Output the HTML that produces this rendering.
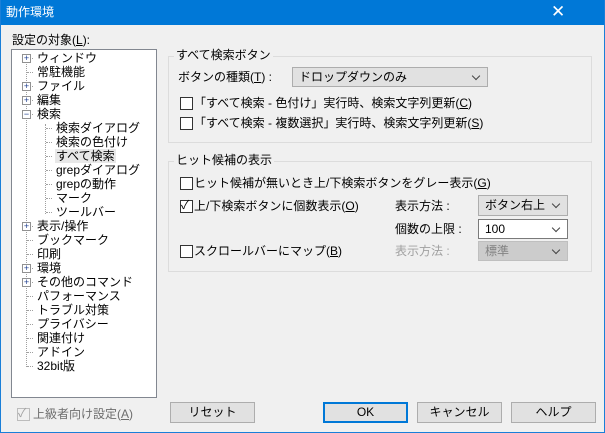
<!DOCTYPE html>
<html><head><meta charset="utf-8"><style>
*{margin:0;padding:0;box-sizing:border-box}
body{width:605px;height:433px;background:#f0f0f0;font-family:"Liberation Sans","Noto Sans CJK JP",sans-serif;font-size:12px;color:#000;position:relative;overflow:hidden}
.a{position:absolute;white-space:nowrap;line-height:14px}
#frame{position:absolute;left:0;top:0;width:605px;height:433px;border:1px solid #1a7fd8;border-top:none}
#title{position:absolute;left:0;top:0;width:605px;height:25px;background:#0078d7;color:#fff;font-size:12px;line-height:25px;padding-left:6px}
.grp{position:absolute;border:1px solid #dcdcdc}
.gt{position:absolute;background:#f0f0f0;padding:0 2px;line-height:14px}
.cb{position:absolute;width:13px;height:13px;border:1px solid #333;background:#fff}
.combo{position:absolute;border:1px solid #adadad;background:#e1e1e1;padding-left:6px;line-height:18px}
.combo:after{content:"";position:absolute;right:8px;top:5px;width:5px;height:5px;border-right:1px solid #444;border-bottom:1px solid #444;transform:rotate(45deg)}
.btn{position:absolute;width:85px;height:21px;border:1px solid #adadad;background:#e1e1e1;text-align:center;line-height:19px}
.pl{position:absolute;width:9px;height:9px;border:1px solid #919191;background:#fff;font-size:9px;line-height:7px;text-align:center;color:#1f3f8f;z-index:2}
.d1,.d2{position:absolute;border-top:1px dotted #a0a0a0;width:6px}
.d1{left:27px}.d2{left:46px}
</style></head><body>
<div id="title">動作環境</div>
<div class="a" style="left:551px;top:3px;color:#fff;font-size:17px;line-height:18px">✕</div>
<div id="frame"></div>
<div class="a" style="left:12px;top:33px">設定の対象(<u>L</u>):</div>
<div style="position:absolute;left:11px;top:49px;width:146px;height:349px;background:#fff;border:1px solid #828790"></div>
<div style="position:absolute;left:26px;top:62px;height:305px;border-left:1px dotted #a0a0a0"></div>
<div style="position:absolute;left:45px;top:124px;height:90px;border-left:1px dotted #a0a0a0"></div>
<div class="d1" style="top:58px"></div><div class="d1" style="top:72px"></div><div class="d1" style="top:86px"></div><div class="d1" style="top:100px"></div><div class="d1" style="top:114px"></div>
<div class="d1" style="top:226px"></div><div class="d1" style="top:240px"></div><div class="d1" style="top:254px"></div><div class="d1" style="top:268px"></div><div class="d1" style="top:282px"></div><div class="d1" style="top:296px"></div><div class="d1" style="top:310px"></div><div class="d1" style="top:324px"></div><div class="d1" style="top:338px"></div><div class="d1" style="top:352px"></div><div class="d1" style="top:366px"></div>
<div class="d2" style="top:128px"></div><div class="d2" style="top:142px"></div><div class="d2" style="top:156px"></div><div class="d2" style="top:170px"></div><div class="d2" style="top:184px"></div><div class="d2" style="top:198px"></div><div class="d2" style="top:212px"></div>
<div class="pl" style="left:22px;top:54px">+</div>
<div class="pl" style="left:22px;top:82px">+</div>
<div class="pl" style="left:22px;top:96px">+</div>
<div class="pl" style="left:22px;top:110px">−</div>
<div class="pl" style="left:22px;top:222px">+</div>
<div class="pl" style="left:22px;top:264px">+</div>
<div class="pl" style="left:22px;top:278px">+</div>
<div class="a" style="left:37px;top:51px">ウィンドウ</div>
<div class="a" style="left:37px;top:65px">常駐機能</div>
<div class="a" style="left:37px;top:79px">ファイル</div>
<div class="a" style="left:37px;top:93px">編集</div>
<div class="a" style="left:37px;top:107px">検索</div>
<div class="a" style="left:56px;top:121px">検索ダイアログ</div>
<div class="a" style="left:56px;top:135px">検索の色付け</div>
<div class="a" style="left:55px;top:149px;background:#e8e8e8;padding:0 1px">すべて検索</div>
<div class="a" style="left:56px;top:163px">grepダイアログ</div>
<div class="a" style="left:56px;top:177px">grepの動作</div>
<div class="a" style="left:56px;top:191px">マーク</div>
<div class="a" style="left:56px;top:205px">ツールバー</div>
<div class="a" style="left:37px;top:219px">表示/操作</div>
<div class="a" style="left:37px;top:233px">ブックマーク</div>
<div class="a" style="left:37px;top:247px">印刷</div>
<div class="a" style="left:37px;top:261px">環境</div>
<div class="a" style="left:37px;top:275px">その他のコマンド</div>
<div class="a" style="left:37px;top:289px">パフォーマンス</div>
<div class="a" style="left:37px;top:303px">トラブル対策</div>
<div class="a" style="left:37px;top:317px">プライバシー</div>
<div class="a" style="left:37px;top:331px">関連付け</div>
<div class="a" style="left:37px;top:345px">アドイン</div>
<div class="a" style="left:37px;top:359px">32bit版</div>

<div class="grp" style="left:168px;top:56px;width:424px;height:87px"></div>
<div class="gt" style="left:174px;top:48px">すべて検索ボタン</div>
<div class="a" style="left:178px;top:70px">ボタンの種類(<u>T</u>) :</div>
<div class="combo" style="left:292px;top:67px;width:196px;height:20px">ドロップダウンのみ</div>
<div class="cb" style="left:180px;top:97px"></div>
<div class="a" style="left:194px;top:96px">「すべて検索 - 色付け」実行時、検索文字列更新(<u>C</u>)</div>
<div class="cb" style="left:180px;top:117px"></div>
<div class="a" style="left:194px;top:116px">「すべて検索 - 複数選択」実行時、検索文字列更新(<u>S</u>)</div>

<div class="grp" style="left:168px;top:161px;width:424px;height:111px"></div>
<div class="gt" style="left:174px;top:153px">ヒット候補の表示</div>
<div class="cb" style="left:180px;top:177px"></div>
<div class="a" style="left:194px;top:176px">ヒット候補が無いとき上/下検索ボタンをグレー表示(<u>G</u>)</div>
<div class="cb" style="left:180px;top:200px;border-color:#333"></div>
<div class="a" style="left:181px;top:198px;font-size:12px">✓</div>
<div class="a" style="left:194px;top:199px">上/下検索ボタンに個数表示(<u>O</u>)</div>
<div class="a" style="left:395px;top:199px">表示方法 :</div>
<div class="combo" style="left:478px;top:195px;width:90px;height:21px">ボタン右上</div>
<div class="a" style="left:395px;top:222px">個数の上限 :</div>
<div class="combo" style="left:478px;top:219px;width:90px;height:20px;background:#fff;border-color:#7a7a7a">100</div>
<div class="cb" style="left:180px;top:245px"></div>
<div class="a" style="left:194px;top:244px">スクロールバーにマップ(<u>B</u>)</div>
<div class="a" style="left:395px;top:244px;color:#a0a0a0">表示方法 :</div>
<div class="combo" style="left:478px;top:241px;width:90px;height:20px;background:#ccc;border-color:#bfbfbf;color:#838383">標準</div>

<div class="cb" style="left:17px;top:408px;border-color:#bcbcbc;background:#f0f0f0"></div>
<div class="a" style="left:18px;top:406px;color:#a0a0a0">✓</div>
<div class="a" style="left:33px;top:407px;color:#6d6d6d">上級者向け設定(<u>A</u>)</div>
<div class="btn" style="left:170px;top:402px">リセット</div>
<div class="btn" style="left:323px;top:402px;border:2px solid #0078d7;line-height:17px">OK</div>
<div class="btn" style="left:417px;top:402px">キャンセル</div>
<div class="btn" style="left:511px;top:402px">ヘルプ</div>
</body></html>
